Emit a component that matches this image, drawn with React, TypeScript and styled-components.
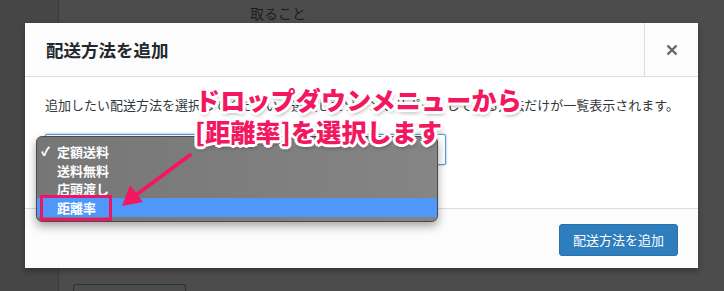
import styled, { createGlobalStyle } from "styled-components";

const GlobalStyle = createGlobalStyle`
  html, body {
    margin: 0;
    padding: 0;
    background: #4b4b4b;
  }
  body {
    font-family: "Noto Sans CJK JP", "Noto Sans", sans-serif;
  }
`;

const Screen = styled.div`
  position: relative;
  width: 724px;
  height: 291px;
  overflow: hidden;
  display: flex;
`;

const Sidebar = styled.div`
  width: 58px;
  background: #464646;
  border-right: 1px solid #3b3b3b;
`;

const Content = styled.div`
  flex: 1;
  background: #4c4c4c;
  display: flex;
  flex-direction: column;
  justify-content: space-between;
  padding: 3px 0 0 14px;
`;

const BackText = styled.div`
  margin-left: 177px;
  font-size: 14px;
  color: #1e1e1e;
`;

const BackButton = styled.div`
  width: 111px;
  height: 8px;
  margin-bottom: -2px;
  border: 1px solid #1f3441;
  border-bottom: none;
  border-radius: 3px 3px 0 0;
`;

const Modal = styled.div`
  position: absolute;
  left: 25px;
  top: 23px;
  width: 673px;
  height: 245px;
  background: #fff;
  display: flex;
  flex-direction: column;
  box-shadow: 0 3px 6px rgba(0, 0, 0, 0.3);
`;

const Header = styled.div`
  height: 53px;
  display: flex;
  background: #fcfcfc;
  border-bottom: 1px solid #dddddd;
`;

const Title = styled.h1`
  flex: 1;
  margin: 0;
  padding-left: 21px;
  display: flex;
  align-items: center;
  font-size: 17.5px;
  font-weight: 600;
  color: #23282d;
`;

const CloseButton = styled.div`
  width: 53px;
  border-left: 1px solid #dddddd;
  display: flex;
  align-items: center;
  justify-content: center;
`;

const Body = styled.div`
  flex: 1;
  padding: 18px 20px 0;
`;

const Intro = styled.p`
  margin: 0;
  font-size: 13px;
  line-height: 19px;
  color: #32373c;
  white-space: nowrap;
`;

const SelectBox = styled.div`
  margin-top: 20px;
  width: 399px;
  height: 29px;
  border: 1px solid #5b9dd9;
  border-radius: 2px;
  box-shadow: 0 0 2px rgba(30, 140, 190, 0.8);
  background: #fff;
`;

const Footer = styled.div`
  height: 59px;
  background: #fcfcfc;
  border-top: 1px solid #dddddd;
  display: flex;
  align-items: center;
  justify-content: flex-end;
  padding: 0 20px;
`;

const PrimaryButton = styled.button`
  height: 32px;
  padding: 0 13px;
  background: #2e7dbd;
  border: 1px solid #2a72ab;
  border-radius: 3px;
  color: #fff;
  font-family: "Noto Sans CJK JP", sans-serif;
  font-size: 13px;
  margin-top: 2px;
`;

const Menu = styled.div`
  position: absolute;
  left: 36px;
  top: 136px;
  width: 400px;
  padding: 5px 0 4px;
  background: linear-gradient(90deg, #767676, #858585);
  border: 1px solid #4a4a4a;
  border-radius: 6px;
  box-shadow: 0 4px 10px rgba(0, 0, 0, 0.35);
`;

const MenuItem = styled.div<{ $active?: boolean }>`
  height: 18.8px;
  display: flex;
  align-items: center;
  padding-left: 4px;
  background: ${(p) => (p.$active ? "#4f97f9" : "transparent")};
  color: #fff;
  font-size: 13px;
  font-weight: 700;
  line-height: 1;
`;

const Check = styled.span`
  width: 16px;
  font-size: 12px;
  font-weight: 900;
`;

const Highlight = styled.div`
  position: absolute;
  left: 40px;
  top: 195px;
  width: 66px;
  height: 20px;
  border: 3px solid #ee1566;
`;

const Callout = styled.div`
  position: absolute;
  left: 195px;
  top: 83px;
  font-size: 25px;
  font-weight: 900;
  line-height: 32px;
  letter-spacing: 0.2px;
  color: #f2175f;
  white-space: nowrap;
  text-shadow: 2px 0 0 #fff, -2px 0 0 #fff, 0 2px 0 #fff, 0 -2px 0 #fff,
    2px 2px 0 #fff, -2px -2px 0 #fff, 2px -2px 0 #fff, -2px 2px 0 #fff,
    3px 0 0 #fff, -3px 0 0 #fff, 0 3px 0 #fff, 0 -3px 0 #fff,
    1px 3px 4px rgba(0, 0, 0, 0.45);
`;

const Arrow = styled.svg`
  position: absolute;
  left: 110px;
  top: 145px;
  overflow: visible;
`;

function App() {
  return (
    <>
      <GlobalStyle />
      <Screen>
        <Sidebar />
        <Content>
          <BackText>取ること</BackText>
          <BackButton />
        </Content>

        <Modal>
          <Header>
            <Title>配送方法を追加</Title>
            <CloseButton>
              <svg width="12" height="12" viewBox="0 0 12 12">
                <path d="M1.5 1.5 L10.5 10.5 M10.5 1.5 L1.5 10.5" stroke="#666" strokeWidth="2.4" />
              </svg>
            </CloseButton>
          </Header>
          <Body>
            <Intro>
              追加したい配送方法を選択してください。選択したゾーンをサポートしている方法だけが一覧表示されます。
            </Intro>
            <SelectBox />
          </Body>
          <Footer>
            <PrimaryButton>配送方法を追加</PrimaryButton>
          </Footer>
        </Modal>

        <Menu>
          <MenuItem>
            <Check>✓</Check>定額送料
          </MenuItem>
          <MenuItem>
            <Check />送料無料
          </MenuItem>
          <MenuItem>
            <Check />店頭渡し
          </MenuItem>
          <MenuItem $active>
            <Check />距離率
          </MenuItem>
        </Menu>
        <Highlight />

        <Arrow width="90" height="70" viewBox="0 0 90 70">
          <line x1="80" y1="10" x2="26" y2="50" stroke="#f2175f" strokeWidth="4" strokeLinecap="round" />
          <polygon points="12,61 20,40 33,57" fill="#f2175f" />
        </Arrow>

        <Callout>
          ドロップダウンメニューから
          <br />
          [距離率]を選択します
        </Callout>
      </Screen>
    </>
  );
}

export default App;
